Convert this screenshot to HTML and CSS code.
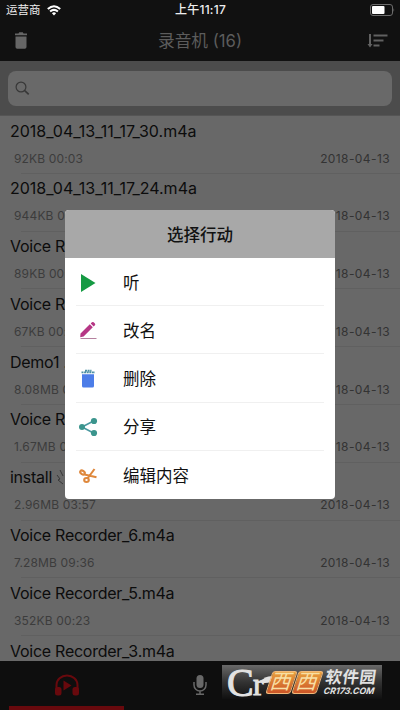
FILE: index.html
```html
<!DOCTYPE html>
<html lang="zh-CN">
<head>
<meta charset="utf-8">
<title>录音机</title>
<link rel="stylesheet" href="styles.css">
</head>
<body>
<div class="screen">
  <header class="top">
    <div class="status">
      <div class="carrier"><span>运营商</span>
        <svg width="14" height="11" viewBox="0 0 14 11" fill="none" stroke="#fff" stroke-width="2"><path d="M.8 4.1Q7-1.6 13.200 4.100M3.100 6.600Q7 3.100 10.900 6.600"/><path d="M4.900 8.200Q7 6.500 9.100 8.200L7 10.500Z" fill="#fff" stroke="none"/></svg>
      </div>
      <div class="clock">上午11:17</div>
      <svg class="battery" width="25" height="12" viewBox="0 0 25 12"><rect x=".5" y=".5" width="22" height="11" rx="2.500" fill="none" stroke="#6c6c6c"/><rect x="2" y="2" width="12.500" height="8" rx="1" fill="#fff"/><path d="M23.500 4q1.500 2 0 4z" fill="#6c6c6c"/></svg>
    </div>
    <div class="nav">
      <svg width="14" height="18" viewBox="0 0 14 18" fill="#666"><path d="M1 1.500h3.500L5.200.3h3.600l.7 1.200H13v1.700H1zM1.500 4.400h11V15q0 1.700-1.700 1.700H3.200Q1.500 16.700 1.500 15z"/></svg>
      <h1>录音机 (16)</h1>
      <svg width="22" height="16" viewBox="0 0 22 16" fill="none" stroke="#616161" stroke-width="2"><path d="M3 1v12M6.500 2.500h14M6.500 7.500h10M6.500 12.500h6"/><path d="M.5 11h5L3 14.500z" fill="#616161" stroke="none"/></svg>
    </div>
  </header>
  <div class="searchbar"><div class="field">
    <svg width="15" height="15" viewBox="0 0 15 15" fill="none" stroke="#383838" stroke-width="1.200"><circle cx="6" cy="6" r="4.900"/><path d="M9.700 9.700l4 3.700" stroke-width="1.700"/></svg>
  </div></div>
  <main class="list">
    <div class="item"><div class="name digits">2018_04_13_11_17_30.m4a</div><div class="meta"><span>92KB 00:03</span><span class="date">2018-04-13</span></div></div>
    <div class="item"><div class="name digits">2018_04_13_11_17_24.m4a</div><div class="meta"><span>944KB 00:03</span><span class="date">2018-04-13</span></div></div>
    <div class="item"><div class="name">Voice Recorder_10.m4a</div><div class="meta"><span>89KB 00:03</span><span class="date">2018-04-13</span></div></div>
    <div class="item"><div class="name">Voice Recorder_9.m4a</div><div class="meta"><span>67KB 00:02</span><span class="date">2018-04-13</span></div></div>
    <div class="item"><div class="name">Demo1 .m4a</div><div class="meta"><span>8.08MB 08:49</span><span class="date">2018-04-13</span></div></div>
    <div class="item"><div class="name">Voice Recorder_7.m4a</div><div class="meta"><span>1.67MB 01:49</span><span class="date">2018-04-13</span></div></div>
    <div class="item"><div class="name">install <svg class="hand" width="8" height="16" viewBox="0 0 8 16" fill="none" stroke="#383838"><path d="M4 1l3 6M1 6l3 4-2 1 5 4"/></svg></div><div class="meta"><span>2.96MB 03:57</span><span class="date">2018-04-13</span></div></div>
    <div class="item"><div class="name">Voice Recorder_6.m4a</div><div class="meta"><span>7.28MB 09:36</span><span class="date">2018-04-13</span></div></div>
    <div class="item"><div class="name">Voice Recorder_5.m4a</div><div class="meta"><span>352KB 00:23</span><span class="date">2018-04-13</span></div></div>
    <div class="item"><div class="name">Voice Recorder_3.m4a</div></div>
  </main>
  <nav class="tabs">
    <div class="tab active">
      <svg width="26" height="23" viewBox="0 0 26 23" fill="#68090d"><path d="M2.500 15V11a10.500 9.500 0 0 1 21 0v4" fill="none" stroke="#68090d" stroke-width="2"/><path d="M9.500 6.500l8 5-8 5z"/><rect x="1" y="13" width="6.500" height="8.500" rx="2.500"/><rect x="18.500" y="13" width="6.500" height="8.500" rx="2.500"/></svg>
    </div>
    <div class="tab">
      <svg width="14" height="22" viewBox="0 0 14 22" fill="none" stroke="#686868" stroke-width="1.500"><rect x="3.500" y="1" width="7" height="13" rx="3.500" fill="#686868" stroke="none"/><path d="M1 8v3a6 6 0 0 0 12 0V8M7 17v3M3 20.200h8"/></svg>
    </div>
    <div class="tab"></div>
  </nav>
</div>

<section class="dialog">
  <h2>选择行动</h2>
  <ul>
    <li><svg width="22" height="22" viewBox="0 0 22 22"><path d="M4 2v18l14.500-9z" fill="#159a43"/></svg><span>听</span></li>
    <li><svg width="22" height="22" viewBox="0 0 22 22"><path d="M3.500 13.500L12.800 4.300l3 3-9.200 9.200-3.400.8zM13.700 3.500l1.200-1.200q.9-.8 1.800 0l1.200 1.200q.8.900 0 1.800l-1.200 1.200z" fill="#b63685"/><path d="M3.500 18.500h16" stroke="#b5819f" stroke-width="1"/></svg><span>改名</span></li>
    <li><svg width="22" height="22" viewBox="0 0 22 22"><path d="M5 6.200h12V18q0 1.500-1.500 1.500h-9Q5 19.500 5 18z" fill="#4c7de8"/><path d="M4.500 4.300h13.500M8 2.600h6.500" stroke="#4a8fa4" stroke-width="1.800" stroke-dasharray="2 .6"/></svg><span>删除</span></li>
    <li><svg width="22" height="22" viewBox="0 0 22 22"><path d="M16.500 5L5 11l11.500 6" fill="none" stroke="#4a98a0" stroke-width="1.600"/><g fill="#3b958d"><circle cx="5" cy="11" r="3"/><circle cx="17" cy="5" r="3.100"/><circle cx="17" cy="17" r="3.100"/></g></svg><span>分享</span></li>
    <li><svg width="22" height="22" viewBox="0 0 22 22" fill="none" stroke="#df883c" stroke-width="2.100"><path d="M7.500 9.500L19.500 12.300M10.500 13.500L17.500 4"/><ellipse cx="5.500" cy="7.500" rx="2.500" ry="1.700" transform="rotate(35 5.500 7.500)"/><ellipse cx="9.500" cy="15" rx="2.300" ry="2"/></svg><span>编辑内容</span></li>
  </ul>
</section>

<aside class="watermark">
  <div class="cr"><span class="big">C</span><span class="small">r</span><svg width="14" height="9" viewBox="0 0 14 9"><path d="M0 7Q3 0 14 1 11 9 2 8z" fill="#e2e2e2"/></svg></div>
  <div class="tiles"><span>西</span><span>西</span></div>
  <div class="site"><b>软件园</b><i>CR173.COM</i></div>
</aside>
</body>
</html>
```
FILE: styles.css
```css
* { box-sizing: border-box; }
body {
  margin: 0;
  width: 400px;
  height: 710px;
  overflow: hidden;
  position: relative;
  background: #0f0f0f;
  font-family: Inter, "Noto Sans CJK SC", sans-serif;
}
svg { display: block; flex: none; }
.screen { height: 710px; display: flex; flex-direction: column; }
.top { height: 61px; background: #111; flex: none; }
.status {
  height: 20px;
  display: grid;
  grid-template-columns: 1fr auto 1fr;
  align-items: center;
  padding: 0 5px 0 6px;
  color: #eee;
  font-size: 11.500px;
  line-height: 20px;
}
.carrier { display: flex; align-items: center; gap: 6px; }
.clock { font-weight: 500; font-size: 12px; letter-spacing: .25px; }
.battery { justify-self: end; }
.nav {
  height: 41px;
  display: flex;
  align-items: center;
  justify-content: space-between;
  padding: 0 11px 0 14px;
}
.nav h1 { margin: 0 0 0 5px; font-size: 16.700px; font-weight: 400; color: #5c5c5c; line-height: 24px; }
.searchbar { height: 55px; flex: none; background: #4c4c4c; padding: 10px 8px; border-bottom: 1px solid #555; }
.field { height: 35px; border-radius: 8px; background: #696969; padding: 10px 7px; }
.list { flex: 1; overflow: hidden; background: #686868; }
.item { height: 57.800px; padding: 3.500px 10px 0; position: relative; }
.item::after {
  content: "";
  position: absolute;
  left: 21px;
  right: 0;
  bottom: 0;
  height: 1px;
  background: #606060;
}
.name { height: 23px; line-height: 23px; font-size: 16px; color: #0c0c0c; white-space: nowrap; letter-spacing: -.26px; }
.digits { letter-spacing: 0; }
.hand { display: inline-block; vertical-align: -2px; }
.meta {
  display: flex;
  justify-content: space-between;
  margin-top: 8px;
  padding-left: 4px;
  font-size: 12px;
  line-height: 16px;
  color: #3c3c3c;
  letter-spacing: .15px;
}
.date { color: #333; letter-spacing: .4px; }
.tabs { height: 49px; flex: none; background: #0e0e0e; display: grid; grid-template-columns: 1fr 1fr 1fr; }
.tab { display: flex; justify-content: center; padding-top: 13px; position: relative; }
.active::after {
  content: "";
  position: absolute;
  left: 9px;
  bottom: 0;
  width: 115px;
  height: 4px;
  background: #68090d;
}
.dialog {
  position: absolute;
  left: 65px;
  top: 210px;
  width: 270px;
  height: 289px;
  border-radius: 4px;
  overflow: hidden;
  background: #fff;
}
.dialog h2 {
  margin: 0;
  height: 48px;
  line-height: 51px;
  text-align: center;
  font-size: 16.500px;
  font-weight: 500;
  color: #111;
  background: #a8a8a8;
}
.dialog ul { margin: 0; padding: 0 11px; list-style: none; }
.dialog li {
  height: 48.200px;
  display: flex;
  align-items: center;
  gap: 24px;
  padding: 2px 0 0 1px;
  font-size: 16.500px;
  line-height: 24px;
  color: #111;
  border-bottom: 1px solid #f0f0f0;
}
.dialog li:last-child { border-bottom: 0; }
.watermark {
  position: absolute;
  left: 222px;
  top: 665px;
  width: 160px;
  height: 34px;
  display: flex;
  align-items: center;
  padding-left: 5px;
  background: linear-gradient(#696969, #333 50%, #101010);
}
.cr { width: 42px; height: 34px; display: flex; color: #e2e2e2; font-family: "Liberation Serif", serif; position: relative; flex: none; }
.big { font-size: 40px; line-height: 36px; width: 26px; -webkit-text-stroke: 1px #e2e2e2; }
.small { font-size: 32px; line-height: 38px; -webkit-text-stroke: 1px #e2e2e2; }
.cr svg { position: absolute; left: 34px; top: 10px; }
.tiles { display: flex; gap: 1px; transform: skewX(-18deg); flex: none; }
.tiles span {
  width: 25px;
  height: 23px;
  border: 1px solid #f2b878;
  border-radius: 3px;
  background: linear-gradient(#e9a13d, #cc5527);
  color: #f8dfa4;
  font-size: 21px;
  line-height: 20px;
  display: flex;
  justify-content: center;
}
.site { margin-left: 5px; color: #e2e2e2; flex: none; transform: skewX(-8deg); }
.site b { display: block; font-size: 16.500px; line-height: 17px; letter-spacing: .5px; }
.site i { display: block; font: italic 700 8.800px/9px Inter, sans-serif; }
```
